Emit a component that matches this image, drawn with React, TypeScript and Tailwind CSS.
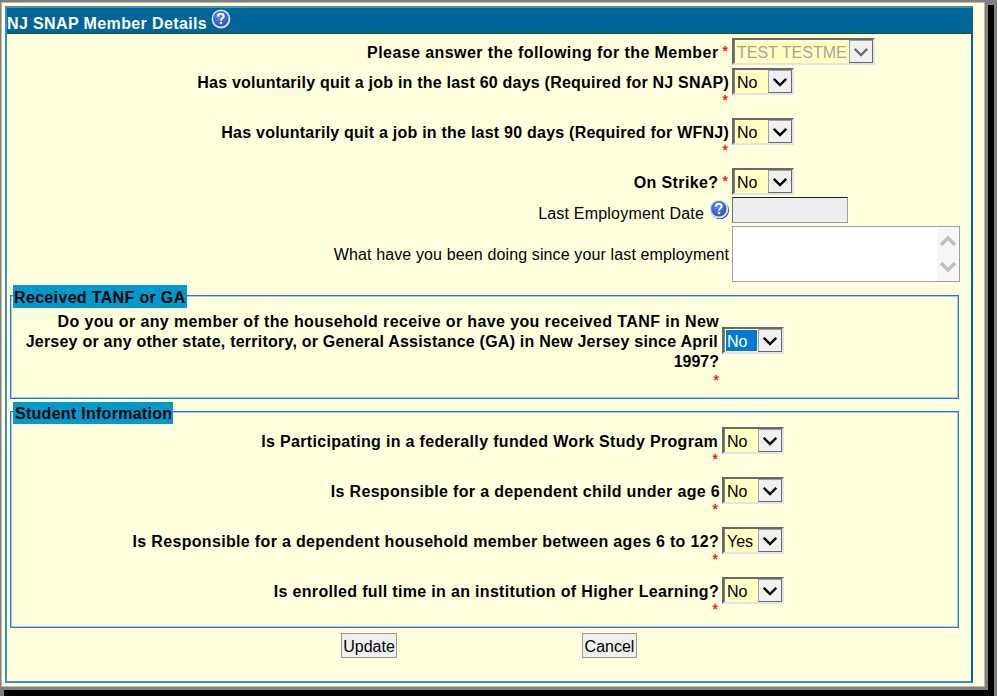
import type { ReactNode } from "react";

function Help() {
  return (
    <svg width="21" height="21" viewBox="0 0 21 21" className="block shrink-0">
      <defs>
        <radialGradient id="ball" cx="40%" cy="35%" r="65%">
          <stop offset="0" stopColor="#5c8df0" />
          <stop offset="1" stopColor="#2a55c4" />
        </radialGradient>
      </defs>
      <circle cx="10.9" cy="10.9" r="9.2" fill="#39405a" />
      <circle cx="10" cy="10" r="9.4" fill="#dfe3ee" />
      <circle cx="9.8" cy="9.8" r="7.7" fill="url(#ball)" />
      <path d="M6.9 7.6C7 3.8 12.9 4 12.7 7.4C12.6 9.4 10 9.3 10 11.8" fill="none" stroke="#fff" strokeWidth="2" />
      <rect x="8.9" y="13" width="2.2" height="2.1" fill="#fff" />
    </svg>
  );
}

function Select({ value, state = "normal" }: { value: string; state?: "normal" | "disabled" | "active" }) {
  const disabled = state === "disabled";
  return (
    <div
      className={`flex h-[27px] shrink-0 border-[2px] border-t-[#696969] border-l-[#696969] border-r-[#e3e3e3] border-b-[#e3e3e3] bg-[#ffffc0] ${disabled ? "w-[143px]" : "w-[62px]"}`}
    >
      <div
        className={`flex-1 overflow-hidden whitespace-nowrap border-l border-[#808080] pl-[2px] text-[16px] leading-[25px] ${
          disabled ? "text-[#a5a5a0]" : state === "active" ? "text-white" : "text-black"
        }`}
      >
        {state === "active" ? (
          <span className="-ml-px mt-px block h-[21px] w-[31px] bg-[#0078d7] pl-px leading-[23px]">{value}</span>
        ) : (
          value
        )}
      </div>
      <div className="flex h-[23px] w-[24px] shrink-0 items-center justify-center border border-t-[#a0a0a0] border-l-[#a0a0a0] border-r-[#696969] border-b-[#696969] bg-[#f0f0f0]">
        <svg width="14" height="10" viewBox="0 0 14 10" className="block shrink-0">
          <path d="M0.8 1.8L7 8L13.2 1.8" fill="none" stroke={disabled ? "#707070" : "#000"} strokeWidth="2.4" />
        </svg>
      </div>
    </div>
  );
}

function Star() {
  return <span className="text-[14px] leading-[18px] font-normal text-[#f00] [-webkit-text-stroke:0.3px_#f00]">*</span>;
}

function Field({
  label,
  children,
  labelWidth = "w-[722px]",
}: {
  label: ReactNode;
  children: ReactNode;
  labelWidth?: string;
}) {
  return (
    <div className="flex h-[50px]">
      <div className={`flex shrink-0 flex-col items-end whitespace-nowrap font-bold ${labelWidth}`}>
        <div className="h-[20px] pt-[5px] leading-[20px]">{label}</div>
        <div className="mr-px mt-[3px] flex h-[18px]">
          <Star />
        </div>
      </div>
      <div className="ml-[3px]">{children}</div>
    </div>
  );
}

export default function App() {
  return (
    <div className="flex h-[696px] w-[997px] overflow-hidden bg-[#808080] font-['Liberation_Sans',Arial,sans-serif] text-[16px] text-black">
      <div className="relative h-[696px] w-[994px] shrink-0">
        <div className="absolute inset-y-0 top-[5px] right-0 left-[4px] bg-black" />
        <div className="relative h-[690px] w-[988px] bg-[#808080] pt-[2px] pl-px">
          <div className="h-[685px] w-[984px] border border-[#b8b8a8] bg-[#ffffdd] pt-[3px] pl-[3px]">
            <div className="h-[677px] w-[968px] border-2 border-t-[#4a94b0] border-r-[#006699] border-b-[#3d91b5] border-l-[#3d91b5]">
              <div className="flex h-[26px] items-start border-b border-[#22550c] bg-[#006699] font-bold text-white">
                <span className="mt-[6px] leading-[20px] tracking-[0.38px]">NJ SNAP Member Details</span>
                <span className="mt-px ml-[4px]">
                  <Help />
                </span>
              </div>

              <div className="flex h-[30px] pt-[4px]">
                <div className="flex w-[722px] justify-end pt-[4px] leading-[20px]">
                  <b className="mt-px tracking-[0.43px]">Please answer the following for the Member</b>
                  <span className="-mt-px ml-[4px] mr-px">
                    <Star />
                  </span>
                </div>
                <div className="ml-[3px]">
                  <Select value="TEST TESTME" state="disabled" />
                </div>
              </div>
              <div className="pt-[4px]">
                <Field label={<span className="tracking-[0.22px]">Has voluntarily quit a job in the last 60 days (Required for NJ SNAP)</span>}>
                  <Select value="No" />
                </Field>
                <Field label={<span className="tracking-[0.23px]">Has voluntarily quit a job in the last 90 days (Required for WFNJ)</span>}>
                  <Select value="No" />
                </Field>
              </div>
              <div className="flex h-[29px]">
                <div className="flex w-[722px] justify-end pt-[4px] leading-[20px]">
                  <b className="mt-px tracking-[0.4px]">On Strike?</b>
                  <span className="-mt-px ml-[4px] mr-px">
                    <Star />
                  </span>
                </div>
                <div className="ml-[3px]">
                  <Select value="No" />
                </div>
              </div>
              <div className="flex h-[29px]">
                <div className="flex w-[723px] items-start justify-end">
                  <span className="mt-[7px] leading-[20px] tracking-[0.2px]">Last Employment Date</span>
                  <span className="mt-[2px] ml-[5px]">
                    <Help />
                  </span>
                </div>
                <div className="ml-[2px] h-[26px] w-[116px] border border-t-[#202020] border-r-[#a0a0a0] border-b-[#a0a0a0] border-l-[#707070] bg-[#eee]" />
              </div>
              <div className="flex h-[59px]">
                <div className="w-[722px] pt-[19px] text-right leading-[20px] tracking-[0.13px]">
                  What have you been doing since your last employment
                </div>
                <div className="ml-[3px] flex h-[56px] w-[228px] justify-end border border-[#a0a0a0] bg-white">
                  <div className="flex w-[22px] flex-col items-center justify-between bg-[#f7f7f7] pt-[8px] pb-[8px]">
                    <svg width="16" height="12" viewBox="0 0 16 12">
                      <path d="M1 10L8 3L15 10" fill="none" stroke="#c0c0c0" strokeWidth="3.5" />
                    </svg>
                    <svg width="16" height="12" viewBox="0 0 16 12">
                      <path d="M1 2L8 9L15 2" fill="none" stroke="#c0c0c0" strokeWidth="3.5" />
                    </svg>
                  </div>
                </div>
              </div>

              <div className="mt-[10px] ml-[3px] h-[104px] w-[949px] border border-[#2878cc] shadow-[inset_0_0_0_1px_#a9cbe0]">
                <div className="-mt-[11px] ml-[2px] h-[23px] w-[174px] bg-[#0099cc] pl-px leading-[25px] font-bold tracking-[0.34px] whitespace-nowrap">
                  Received TANF or GA
                </div>
                <div className="flex">
                  <div className="w-[708px] pt-[4px] text-right leading-[20px] font-bold whitespace-nowrap">
                    <div className="tracking-[0.38px]">Do you or any member of the household receive or have you received TANF in New</div>
                    <div className="mr-px tracking-[0.23px]">Jersey or any other state, territory, or General Assistance (GA) in New Jersey since April</div>
                    <div className="tracking-normal">1997?</div>
                    <div className="-mt-px flex justify-end">
                      <Star />
                    </div>
                  </div>
                  <div className="mt-[19px] ml-[3px]">
                    <Select value="No" state="active" />
                  </div>
                </div>
              </div>

              <div className="mt-[12px] ml-[3px] h-[217px] w-[949px] border border-[#2878cc] shadow-[inset_0_0_0_1px_#a9cbe0]">
                <div className="-mt-[10px] ml-[2px] h-[22px] w-[160px] bg-[#0099cc] pl-[2px] leading-[24px] font-bold tracking-[0.28px] whitespace-nowrap">
                  Student Information
                </div>
                <div className="pt-[3px]">
                  <Field labelWidth="w-[708px]" label={<span className="mr-px tracking-[0.33px]">Is Participating in a federally funded Work Study Program</span>}>
                    <Select value="No" />
                  </Field>
                  <Field labelWidth="w-[708px]" label={<span className="-mr-px tracking-[0.33px]">Is Responsible for a dependent child under age 6</span>}>
                    <Select value="No" />
                  </Field>
                  <Field labelWidth="w-[708px]" label={<span className="tracking-[0.33px]">Is Responsible for a dependent household member between ages 6 to 12?</span>}>
                    <Select value="Yes" />
                  </Field>
                  <Field labelWidth="w-[708px]" label={<span className="tracking-[0.33px]">Is enrolled full time in an institution of Higher Learning?</span>}>
                    <Select value="No" />
                  </Field>
                </div>
              </div>

              <div className="mt-[5px] ml-[334px] flex gap-[185px]">
                <button className="h-[25px] w-[56px] border border-[#999] bg-[#efefef] text-center leading-[25px] whitespace-nowrap">Update</button>
                <button className="h-[25px] w-[55px] border border-[#999] bg-[#efefef] text-center leading-[25px] whitespace-nowrap">Cancel</button>
              </div>
            </div>
          </div>
        </div>
      </div>
    </div>
  );
}
